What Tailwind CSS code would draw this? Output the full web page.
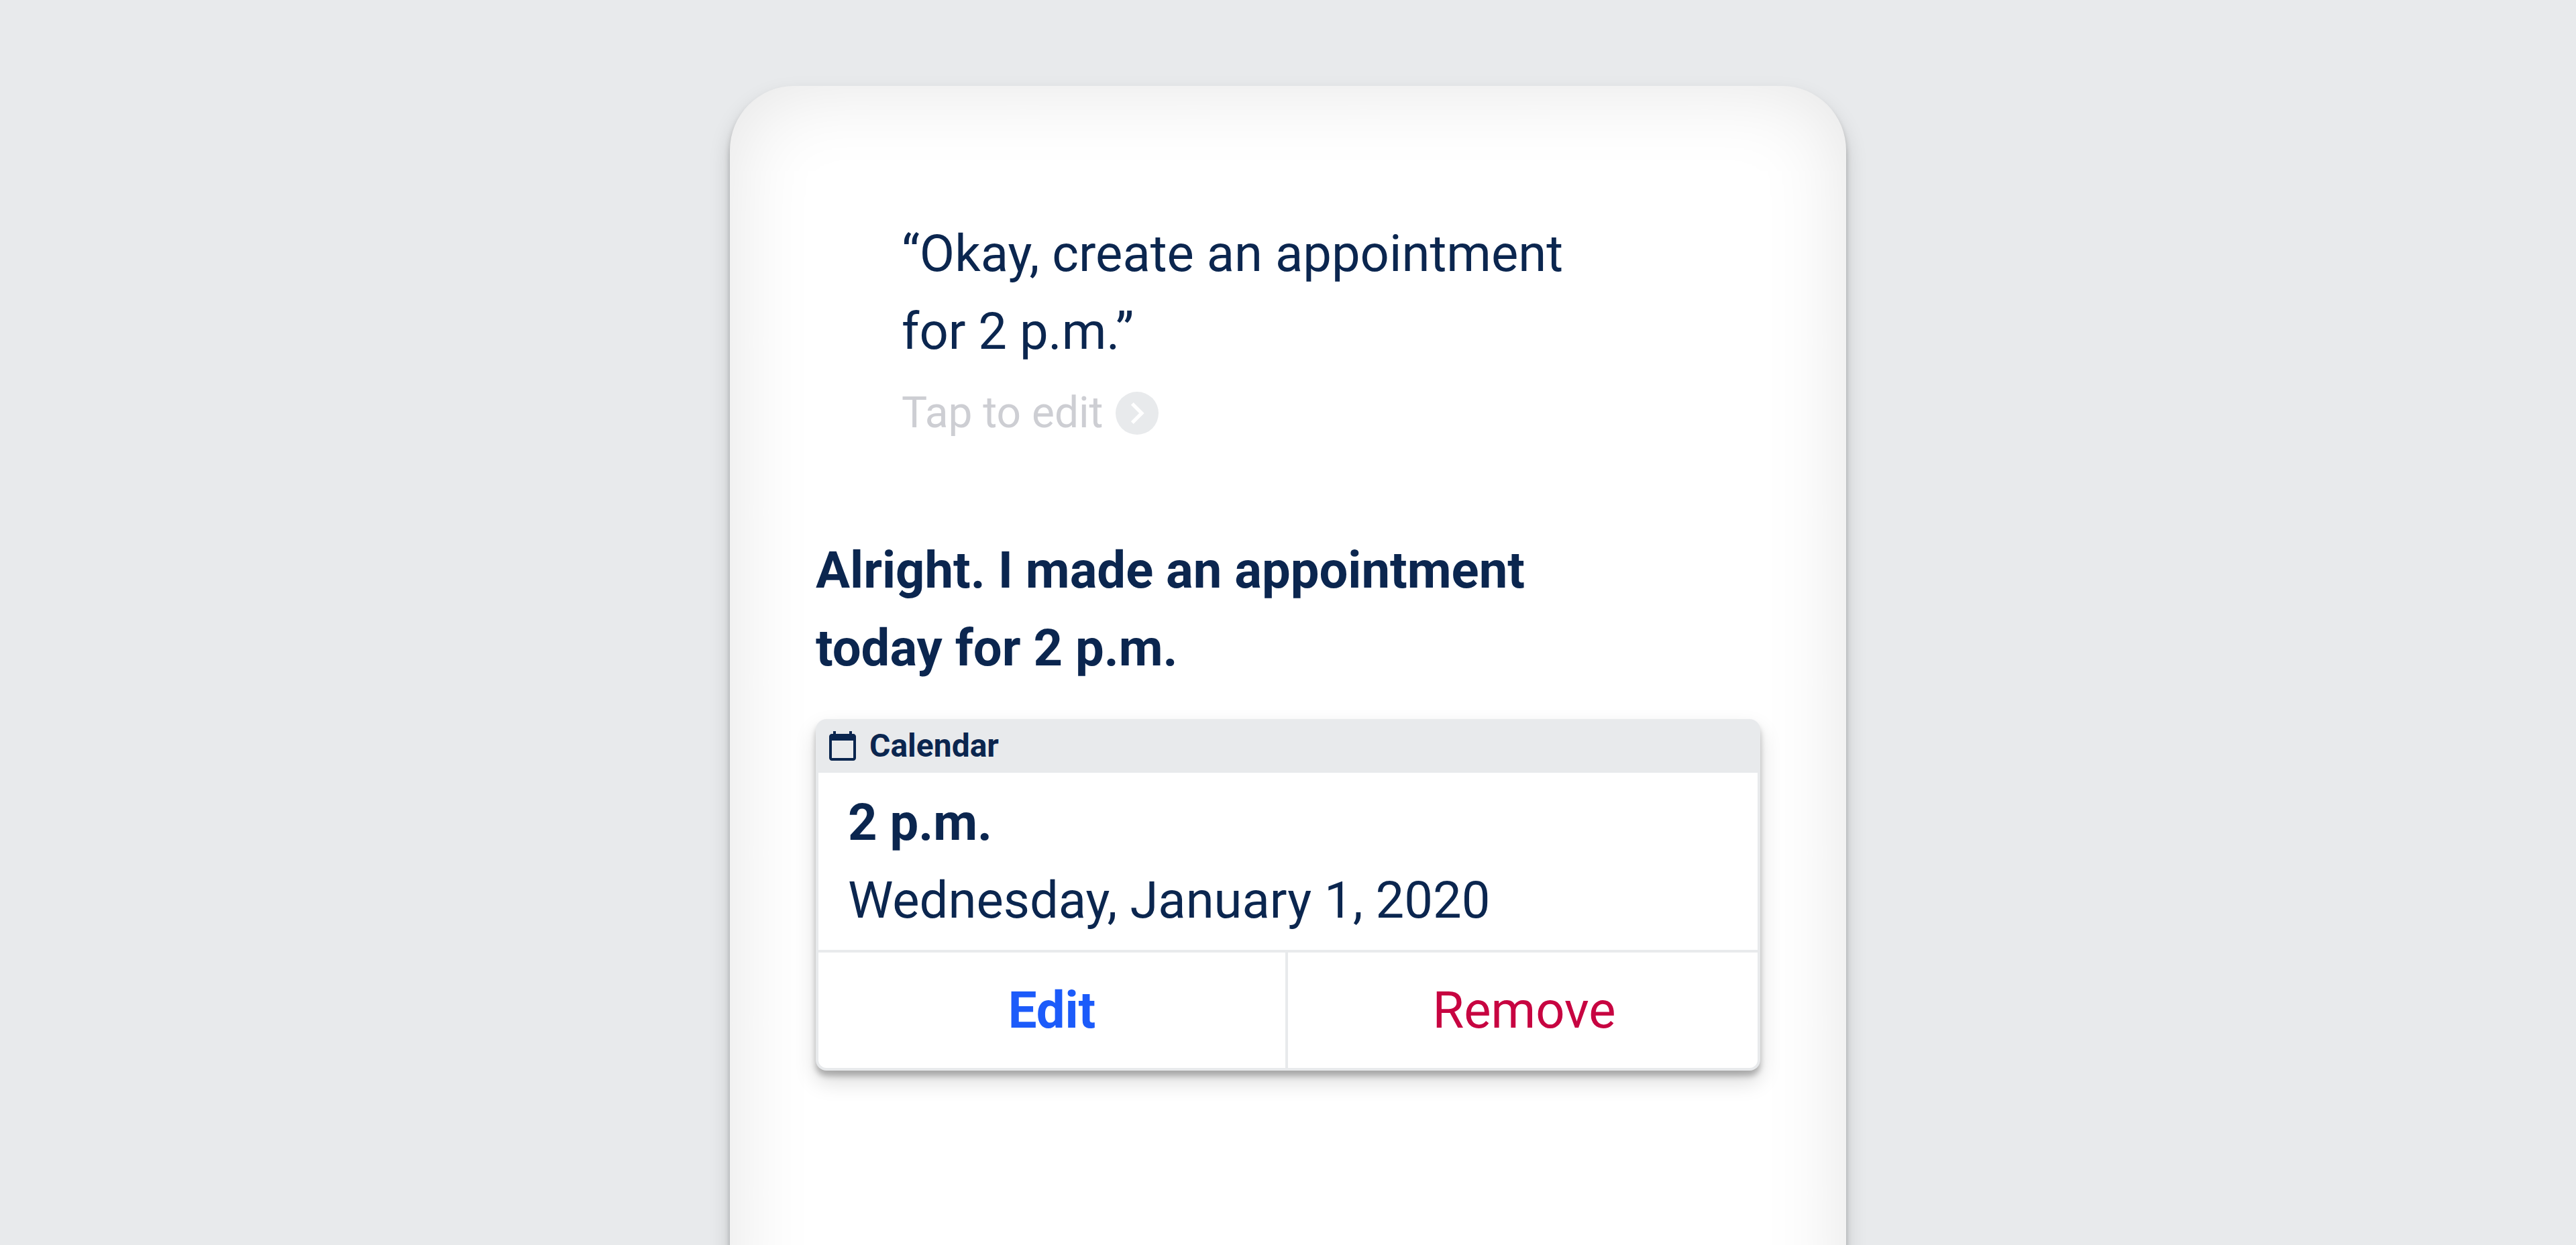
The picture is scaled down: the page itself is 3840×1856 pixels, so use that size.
<!DOCTYPE html>
<html lang="en">
<head>
<meta charset="utf-8">
<meta name="viewport" content="width=device-width, initial-scale=1">
<title>Assistant</title>
<script src="https://cdn.jsdelivr.net/npm/@tailwindcss/browser@4"></script>
</head>
<body class="bg-[#e8eaec] font-['Roboto',sans-serif] text-[#0b264f]">
<main class="flex h-screen justify-center overflow-hidden pt-32">
  <section class="h-[120vh] w-full max-w-[1664px] shrink-0 rounded-[96px] bg-white px-32 pt-48 text-[76px] leading-[116px] shadow-[0_8px_8px_rgba(0,0,0,0.25),0_16px_32px_rgba(0,0,0,0.15),inset_0_0_128px_rgba(0,0,0,0.11)]">
    <div class="pl-32">
      <p class="max-w-[1024px]">“Okay, create an appointment for 2 p.m.”</p>
      <button type="button" class="mt-4 flex items-center gap-[18px] text-[64px] leading-[96px] text-[#cdced3]">
        Tap to edit
        <svg class="size-16" viewBox="0 0 24 24" aria-hidden="true">
          <circle cx="12" cy="12" r="12" fill="#e8eaec"/>
          <path d="M10 6 8.59 7.41 13.17 12l-4.58 4.59L10 18l6-6z" fill="#fff"/>
        </svg>
      </button>
    </div>

    <p class="mt-32 max-w-[1152px] font-bold">Alright. I made an appointment today for 2 p.m.</p>

    <article class="mt-12 rounded-2xl bg-[#e8eaec] p-1 pt-0 shadow-[0_8px_8px_rgba(0,0,0,0.25),0_16px_32px_rgba(0,0,0,0.15)]">
      <header class="flex h-20 items-center gap-4 px-3">
        <svg class="size-12" viewBox="0 0 24 24" fill="currentColor" aria-hidden="true">
          <path d="M20 3h-1V1h-2v2H7V1H5v2H4c-1.1 0-2 .9-2 2v16c0 1.1.9 2 2 2h16c1.1 0 2-.9 2-2V5c0-1.1-.9-2-2-2zm0 18H4V8h16v13z"/>
        </svg>
        <h2 class="text-5xl font-bold">Calendar</h2>
      </header>
      <div class="rounded-b-xl bg-white">
        <div class="px-11 py-4">
          <p class="font-bold">2 p.m.</p>
          <p>Wednesday, January 1, 2020</p>
        </div>
        <div class="grid grid-cols-2 border-t-4 border-[#e8eaec]">
          <button type="button" class="border-r-4 border-[#e8eaec] py-7 font-bold text-[#1c5bfa]">Edit</button>
          <button type="button" class="py-7 pl-1 text-[#c70441]">Remove</button>
        </div>
      </div>
    </article>
  </section>
</main>
</body>
</html>
